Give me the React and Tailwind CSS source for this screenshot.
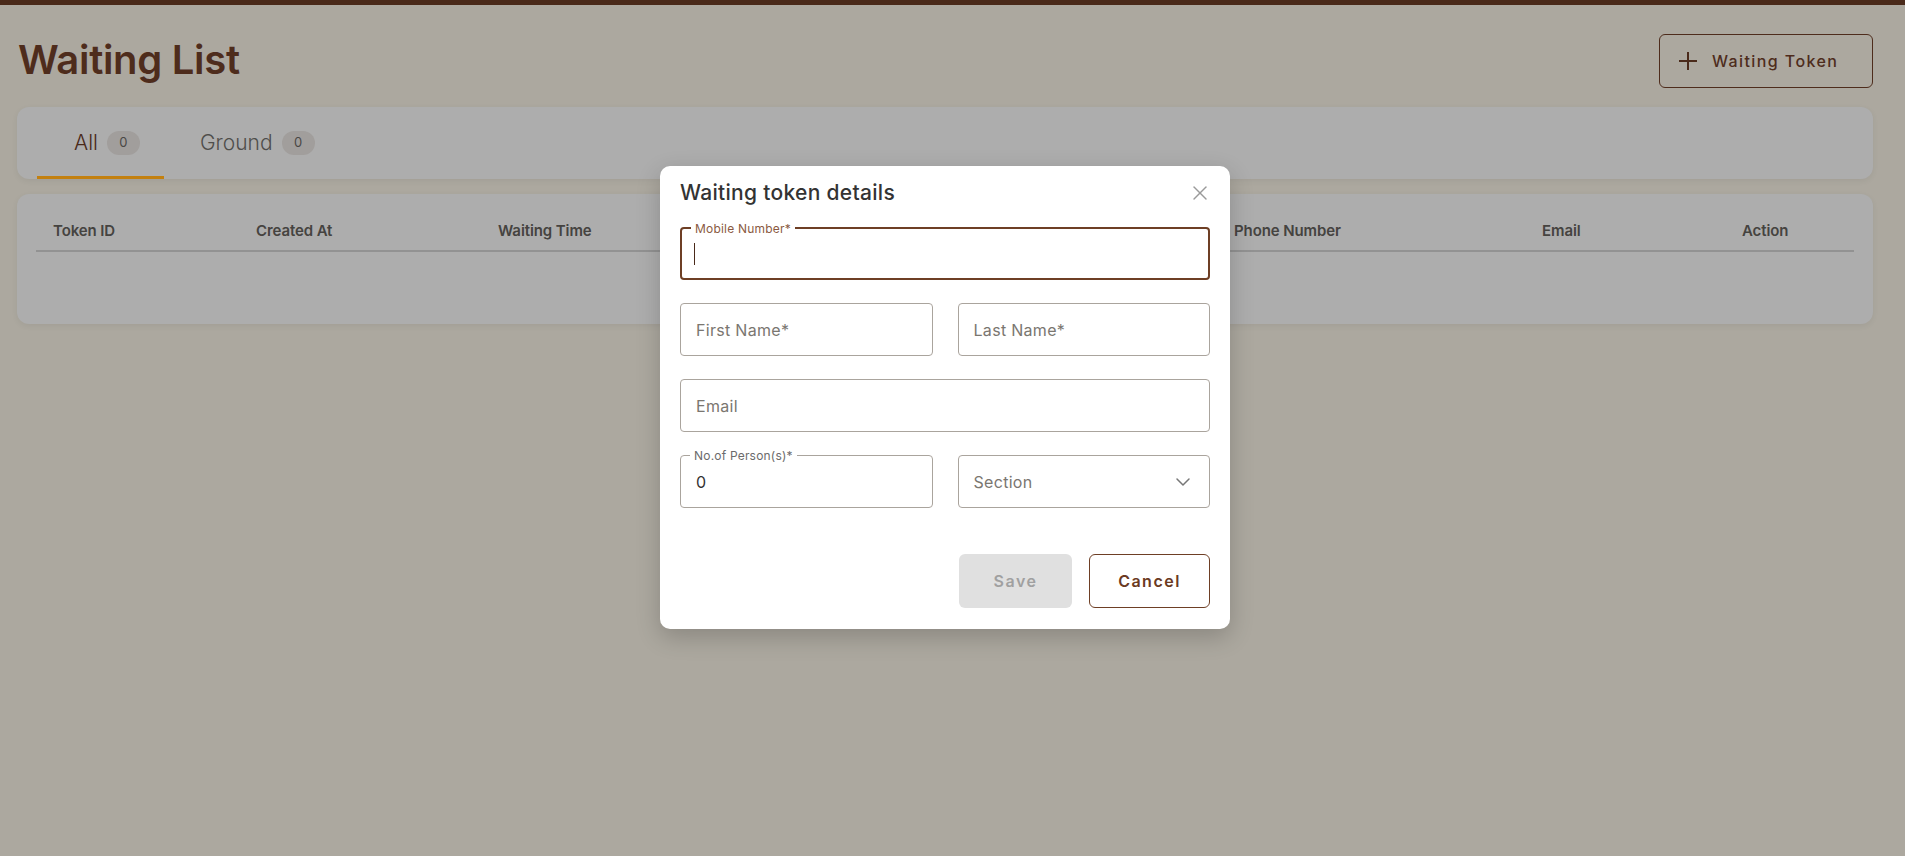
import React, { useState } from "react";
import { X, ChevronDown } from "lucide-react";

const font = { fontFamily: "Inter, 'Noto Sans', sans-serif" };

// the middle two headers sit under the open dialog, so they are left blank
const columns = [
  "Token ID",
  "Created At",
  "Waiting Time",
  "",
  "",
  "Phone Number",
  "Email",
  "Action",
];

const Field = ({ placeholder, label, value, focused, className = "" }) => {
  return (
    <div
      className={`relative h-[53px] rounded-[4px] bg-white ${
        focused ? "border-2 border-[#6e3f25]" : "border border-[#aaa49d]"
      } ${className}`}
    >
      {label && (
        <span
          className={`absolute left-[9px] top-0 -translate-y-1/2 bg-white px-[4px] text-[12px] leading-[14px] tracking-[0.2px] ${
            focused ? "text-[#8a5a42]" : "text-[#6b6b6b]"
          }`}
        >
          {label}
        </span>
      )}
      <div
        className={`flex h-full items-center ${
          focused ? "pl-[12px]" : "pl-[15px]"
        } text-[16px] tracking-[0.3px]`}
      >
        {focused ? (
          <span className="inline-block h-[22px] w-px bg-[#4a2a1a]"></span>
        ) : value ? (
          <span className="text-[#333]">{value}</span>
        ) : (
          <span className="text-[#7a7670]">{placeholder}</span>
        )}
      </div>
    </div>
  );
};

const Tab = ({ name, count, active }) => (
  <div
    className={`relative flex h-full items-center ${
      active ? "pl-[37px] pr-[24px]" : "pl-[36px] pr-[24px]"
    }`}
  >
    <span
      className={`text-[21px] font-light ${
        active ? "text-[#4a2a1a]" : "text-[#4f4d4b]"
      }`}
    >
      {name}
    </span>
    <span className="ml-[9px] flex h-[24px] w-[33px] items-center justify-center rounded-full bg-[#a19e9c] text-[13px] text-[#4a4846]">
      {count}
    </span>
    {active && (
      <span className="absolute bottom-0 left-0 right-0 h-[3px] bg-[#c3800f]"></span>
    )}
  </div>
);

export default function App() {
  const [open] = useState(true);

  return (
    <div className="relative min-h-[856px] bg-[#aca89f]" style={font}>
      <div className="h-[5px] bg-[#4a2a1a]"></div>
      <div className="pl-[17px] pr-[32px]">
        <header className="flex h-[102px] items-center justify-between pt-[9px]">
          <h1 className="pl-px pb-[2px] text-[40px] font-semibold tracking-[-0.3px] text-[#4e2c1c]">
            Waiting List
          </h1>
          <button className="flex h-[54px] w-[214px] items-center rounded-[6px] border border-[#4e2c1c] pl-[18px] text-[16px] font-medium tracking-[1.4px] text-[#4e2c1c]">
            <svg width="20" height="20" viewBox="0 0 20 20" className="mr-[14px]">
              <path
                d="M10 1v18M1 10h18"
                stroke="#4a2a1a"
                strokeWidth="2"
                fill="none"
              />
            </svg>
            Waiting Token
          </button>
        </header>

        <div className="flex h-[72px] rounded-[12px] bg-[#adadad] pl-[20px] shadow-[0_2px_6px_rgba(0,0,0,0.06)]">
          <Tab name="All" count={0} active />
          <Tab name="Ground" count={0} />
        </div>

        <div className="mt-[15px] h-[130px] rounded-[12px] bg-[#adadad] px-[19px] pt-[19px] shadow-[0_2px_6px_rgba(0,0,0,0.06)]">
          <div className="grid h-[39px] grid-cols-[203px_242px_244px_248px_244px_308px_200px_1fr] items-center border-b-2 border-[#929292]">
            {columns.map((c, i) => (
              <div
                key={i}
                className="pl-[17px] text-[15px] font-semibold tracking-[-0.1px] text-[#454340]"
              >
                {c}
              </div>
            ))}
          </div>
        </div>
      </div>

      {open && (
        <div className="absolute left-[660px] top-[166px] w-[570px] rounded-[10px] bg-white px-[20px] pb-[21px] pt-[12px] shadow-[0_8px_24px_rgba(0,0,0,0.2)]">
          <div className="flex h-[30px] items-center justify-between">
            <h2 className="text-[21px] font-medium tracking-[0.3px] text-[#333]">
              Waiting token details
            </h2>
            <X size={24} strokeWidth={1.4} className="mr-[-2px] text-[#9a9a9a]" />
          </div>

          <div className="mt-[19px] flex flex-col gap-[23px]">
            <Field label="Mobile Number*" focused />
            <div className="grid grid-cols-2 gap-[25px]">
              <Field placeholder="First Name*" />
              <Field placeholder="Last Name*" />
            </div>
            <Field placeholder="Email" />
            <div className="grid grid-cols-2 gap-[25px]">
              <Field label="No.of Person(s)*" value="0" />
              <div className="relative flex h-[53px] items-center justify-between rounded-[4px] border border-[#aaa49d] pl-[15px] pr-[14px]">
                <span className="text-[16px] tracking-[0.3px] text-[#7a7670]">
                  Section
                </span>
                <ChevronDown size={24} strokeWidth={1.5} className="text-[#777]" />
              </div>
            </div>
          </div>

          <div className="mt-[46px] flex justify-end gap-[17px]">
            <button className="h-[54px] w-[113px] rounded-[6px] bg-[#e0e0e0] text-[16px] font-semibold tracking-[1.5px] text-[#a0a0a0]">
              Save
            </button>
            <button className="h-[54px] w-[121px] rounded-[6px] border border-[#6e3f25] text-[16px] font-semibold tracking-[1.5px] text-[#6b3a22]">
              Cancel
            </button>
          </div>
        </div>
      )}
    </div>
  );
}
